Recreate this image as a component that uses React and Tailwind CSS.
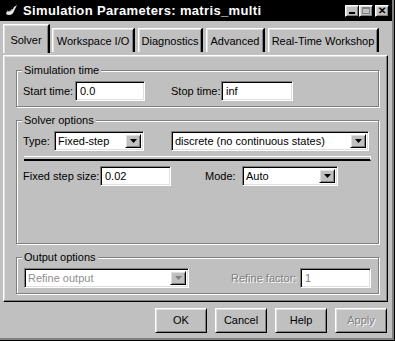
import React from 'react';

const raised =
  'border border-t-white border-l-white border-r-black border-b-black shadow-[inset_1px_1px_0_#dfdfdf,inset_-1px_-1px_0_#808080]';
const sunken =
  'border border-t-[#808080] border-l-[#808080] border-r-white border-b-white shadow-[inset_1px_1px_0_#000,inset_-1px_-1px_0_#dfdfdf]';

const Field = ({ value, w, disabled }) => (
  <div className={`${sunken} ${w} h-[20px] bg-white flex items-center pl-[4px] ${disabled ? 'text-[#808080]' : 'text-black'}`}>
    {value}
  </div>
);

const Arrow = ({ disabled }) => (
  <div className={`${raised} w-[16px] h-full bg-[#c0c0c0] flex items-center justify-center`}>
    <svg width="7" height="4" viewBox="0 0 7 4">
      <polygon points="0,0 7,0 3.5,4" fill={disabled ? '#808080' : '#000'} />
    </svg>
  </div>
);

const Select = ({ value, w, disabled }) => (
  <div className={`${sunken} ${w} h-[20px] bg-white flex items-stretch p-[2px]`}>
    <div className={`flex-1 flex items-center pl-[1px] ${disabled ? 'text-[#909090]' : 'text-black'}`}>{value}</div>
    <Arrow disabled={disabled} />
  </div>
);

const Group = ({ title, h, children }) => (
  <div
    className={`relative w-[363px] ${h} border border-[#808080] shadow-[inset_1px_1px_0_#fff,1px_1px_0_#fff]`}
  >
    <span className="absolute left-[5px] top-[-8px] bg-[#c0c0c0] px-[2px] leading-[14px]">{title}</span>
    {children}
  </div>
);

const Tab = ({ label, active, w }) =>
  active ? (
    <div className={`${w} h-[29px] mt-[3px] -mr-[2px] z-10 bg-[#c0c0c0] border-t border-l border-white border-r-2 border-r-black flex justify-center pt-[7px] shadow-[inset_1px_1px_0_#dfdfdf,inset_-1px_0_0_#808080]`}>
      {label}
    </div>
  ) : (
    <div className={`${w} h-[24px] mt-[7px] bg-[#c0c0c0] border-t border-l border-white border-r-2 border-r-black flex justify-center pt-[4px] shadow-[inset_1px_1px_0_#dfdfdf,inset_-1px_0_0_#808080]`}>
      {label}
    </div>
  );

const Button = ({ label, disabled }) => (
  <div className={`${raised} w-[52px] h-[25px] flex items-center justify-center ${disabled ? 'text-[#808080] [text-shadow:1px_1px_0_#fff]' : ''}`}>
    {label}
  </div>
);

export default function App() {
  return (
    <div className="w-[395px] h-[341px] bg-[#c0c0c0] border-r border-b border-black font-['Liberation_Sans',Arial,sans-serif] text-[11px] text-black overflow-hidden">
      <div className="h-full border-r-2 border-b-2 border-[#808080] flex flex-col">
        {/* title bar */}
        <div className="h-[21px] bg-black flex items-center pl-[4px] pr-[3px]">
          <svg width="15" height="15" viewBox="0 0 15 15">
            <path d="M2 11 C5 13 9 12 10 8 L13 2 L10 4 C9 7 6 9 3 8 Z" fill="#e8e8e8" />
            <path d="M3 8 C5 9 7 8 8 6" stroke="#888" strokeWidth="1" fill="none" />
          </svg>
          <span className="ml-[4px] text-white font-bold text-[13px] tracking-[0.35px]">Simulation Parameters: matris_multi</span>
          <div className="ml-auto flex items-center gap-0">
            <div className={`${raised} w-[14px] h-[12px] bg-[#c0c0c0] flex items-end justify-center pb-[2px]`}>
              <div className="w-[6px] h-[2px] bg-black" />
            </div>
            <div className={`${raised} w-[14px] h-[12px] bg-[#c0c0c0] flex items-center justify-center`}>
              <div className="w-[8px] h-[7px] border border-t-2 border-[#808080]" />
            </div>
            <div className={`${raised} ml-[2px] w-[14px] h-[12px] bg-[#c0c0c0] flex items-center justify-center text-[10px] font-bold leading-none`}>
              ✕
            </div>
          </div>
        </div>

        {/* tabs */}
        <div className="flex pl-[3px] h-[34px] items-start">
          <Tab label="Solver" active w="w-[47px]" />
          <div className="w-[4px]" />
          <Tab label="Workspace I/O" w="w-[83px]" />
          <div className="w-[3px]" />
          <Tab label="Diagnostics" w="w-[65px]" />
          <div className="w-[3px]" />
          <Tab label="Advanced" w="w-[59px]" />
          <div className="w-[3px]" />
          <Tab label="Real-Time Workshop" w="w-[111px]" />
        </div>

        {/* panel */}
        <div className="ml-[3px] w-[385px] h-[247px] border border-t-white border-l-white border-r-black border-b-black shadow-[inset_-1px_-1px_0_#808080,inset_1px_1px_0_#dfdfdf] pl-[12px] pt-[14px]">
          <Group title="Simulation time" h="h-[37px]">
            <div className="flex items-center mt-[10px] pl-[6px]">
              <span className="w-[52px]">Start time:</span>
              <Field value="0.0" w="w-[70px]" />
              <span className="ml-[26px] w-[50px]">Stop time:</span>
              <Field value="inf" w="w-[72px]" />
            </div>
          </Group>

          <div className="h-[13px]" />
          <Group title="Solver options" h="h-[124px]">
            <div className="flex items-center mt-[10px] pl-[6px]">
              <span className="w-[31px]">Type:</span>
              <Select value="Fixed-step" w="w-[90px]" />
              <div className="w-[27px]" />
              <Select value="discrete (no continuous states)" w="w-[198px]" />
            </div>
            <div className="ml-[7px] mt-[5px] w-[347px] h-[5px] border-t border-r border-white border-b-2 border-b-black" />
            <div className="flex items-center mt-[5px] pl-[6px]">
              <span className="w-[77px]">Fixed step size:</span>
              <Field value="0.02" w="w-[71px]" />
              <span className="ml-[34px] w-[37px]">Mode:</span>
              <Select value="Auto" w="w-[96px]" />
            </div>
          </Group>

          <div className="h-[13px]" />
          <Group title="Output options" h="h-[37px]">
            <div className="flex items-center mt-[10px] pl-[7px]">
              <Select value="Refine output" w="w-[165px]" disabled />
              <span className="ml-[42px] w-[69px] text-[#808080] [text-shadow:1px_1px_0_#fff]">Refine factor:</span>
              <Field value="1" w="w-[71px]" disabled />
            </div>
          </Group>
        </div>

        {/* buttons */}
        <div className="flex gap-[8px] pl-[155px] mt-[6px]">
          <Button label="OK" />
          <Button label="Cancel" />
          <Button label="Help" />
          <Button label="Apply" disabled />
        </div>
      </div>
    </div>
  );
}
